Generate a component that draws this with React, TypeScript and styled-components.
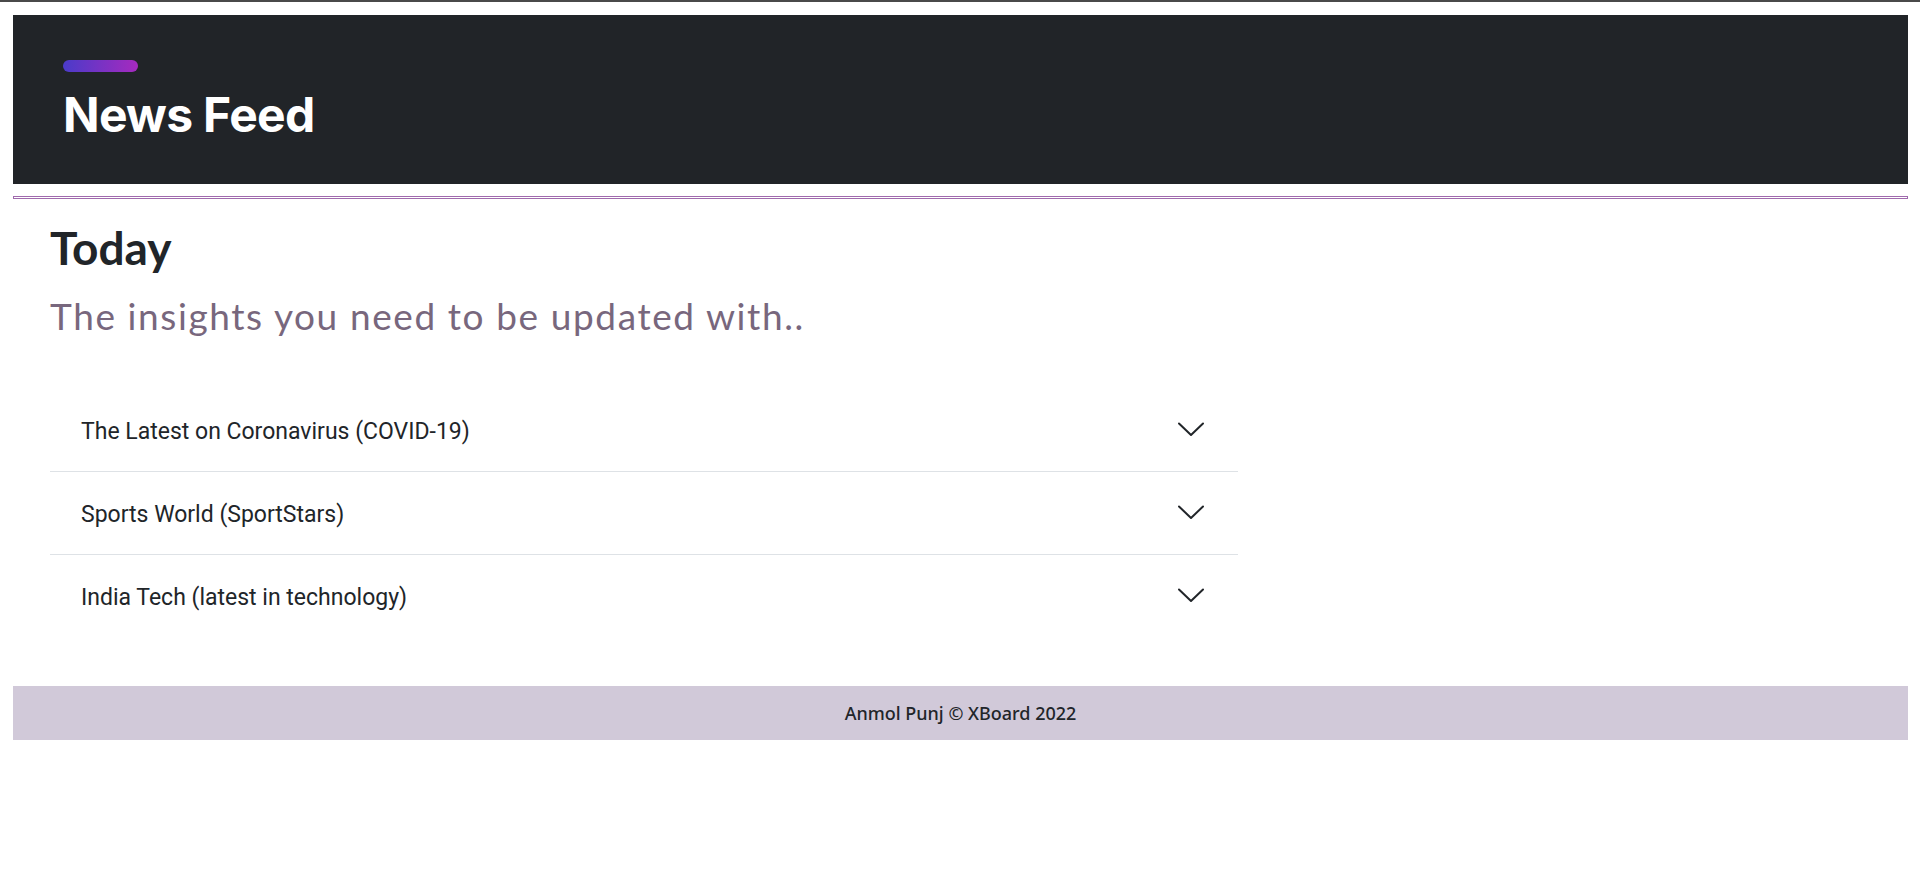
import React, { useState } from 'react';
import styled, { createGlobalStyle } from 'styled-components';

const GlobalStyle = createGlobalStyle`
  html, body {
    margin: 0;
    padding: 0;
    background: #ffffff;
  }
  body {
    border-top: 2px solid #4a4a4a;
    font-family: 'Noto Sans', sans-serif;
  }
  * {
    box-sizing: border-box;
  }
`;

const Page = styled.div`
  padding: 13px 12px 0 13px;
`;

const Header = styled.header`
  height: 169px;
  background: #212428;
  padding: 45px 50px 0;
`;

const AccentBar = styled.div`
  width: 75px;
  height: 12px;
  border-radius: 6px;
  background: linear-gradient(90deg, #4a3bc9 0%, #a62abf 100%);
`;

const Title = styled.h1`
  margin: 13px 0 0;
  font-family: Inter, 'Liberation Sans', sans-serif;
  font-weight: 700;
  font-size: 48px;
  line-height: 60px;
  letter-spacing: -0.7px;
  color: #ffffff;
`;

const Rule = styled.hr`
  margin: 12px 0 0;
  height: 3px;
  border: 1px solid #a06aad;
  background: transparent;
`;

const Main = styled.main`
  padding: 0 37px;
`;

const Heading = styled.h2`
  margin: 21px 0 0;
  font-family: Lato, 'Noto Sans', sans-serif;
  font-weight: 700;
  font-size: 46px;
  line-height: 1.2;
  color: #212529;
`;

const SubHeading = styled.p`
  margin: 19px 0 0;
  font-family: Lato, 'Noto Sans', sans-serif;
  font-weight: 400;
  font-size: 37px;
  line-height: 1.2;
  letter-spacing: 1.6px;
  color: #78677d;
`;

const Accordion = styled.div`
  width: 1188px;
  margin-top: 50px;
`;

const Item = styled.div`
  border-bottom: 1px solid #dee2e6;
  &:last-child {
    border-bottom: none;
  }
`;

const ItemButton = styled.button`
  width: 100%;
  height: 82px;
  display: flex;
  align-items: center;
  justify-content: space-between;
  padding: 4px 34px 0 31px;
  border: none;
  background: transparent;
  cursor: pointer;
  font-family: Roboto, 'Noto Sans', sans-serif;
  font-size: 23px;
  font-weight: 400;
  color: #212529;
  text-align: left;
`;

const Chevron = styled.svg<{ $open: boolean }>`
  width: 26px;
  height: 15px;
  flex-shrink: 0;
  margin-top: -4px;
  transform: ${(p) => (p.$open ? 'rotate(180deg)' : 'none')};
  transition: transform 0.2s ease-in-out;
`;

const ItemBody = styled.div`
  padding: 0 31px 24px;
  font-family: Roboto, 'Noto Sans', sans-serif;
  font-size: 18px;
  color: #495057;
`;

const Footer = styled.footer`
  margin-top: 49px;
  height: 54px;
  display: flex;
  align-items: center;
  justify-content: center;
  background: #d1c9d9;
  font-family: 'Noto Sans', 'Open Sans', sans-serif;
  font-size: 18px;
  font-weight: 500;
  color: #212529;
`;

const topics = [
  'The Latest on Coronavirus (COVID-19)',
  'Sports World (SportStars)',
  'India Tech (latest in technology)',
];

function Topic({ title }: { title: string }) {
  const [open, setOpen] = useState(false);
  return (
    <Item>
      <ItemButton onClick={() => setOpen(!open)}>
        <span>{title}</span>
        <Chevron $open={open} viewBox="0 0 26 15" fill="none">
          <polyline
            points="1,1.5 13,13 25,1.5"
            stroke="#212529"
            strokeWidth="2"
            strokeLinecap="round"
            strokeLinejoin="round"
          />
        </Chevron>
      </ItemButton>
      {open && <ItemBody>Loading the latest stories…</ItemBody>}
    </Item>
  );
}

export default function App() {
  return (
    <>
      <GlobalStyle />
      <Page>
        <Header>
          <AccentBar />
          <Title>News Feed</Title>
        </Header>
        <Rule />
        <Main>
          <Heading>Today</Heading>
          <SubHeading>The insights you need to be updated with..</SubHeading>
          <Accordion>
            {topics.map((t) => (
              <Topic key={t} title={t} />
            ))}
          </Accordion>
        </Main>
        <Footer>Anmol Punj © XBoard 2022</Footer>
      </Page>
    </>
  );
}
